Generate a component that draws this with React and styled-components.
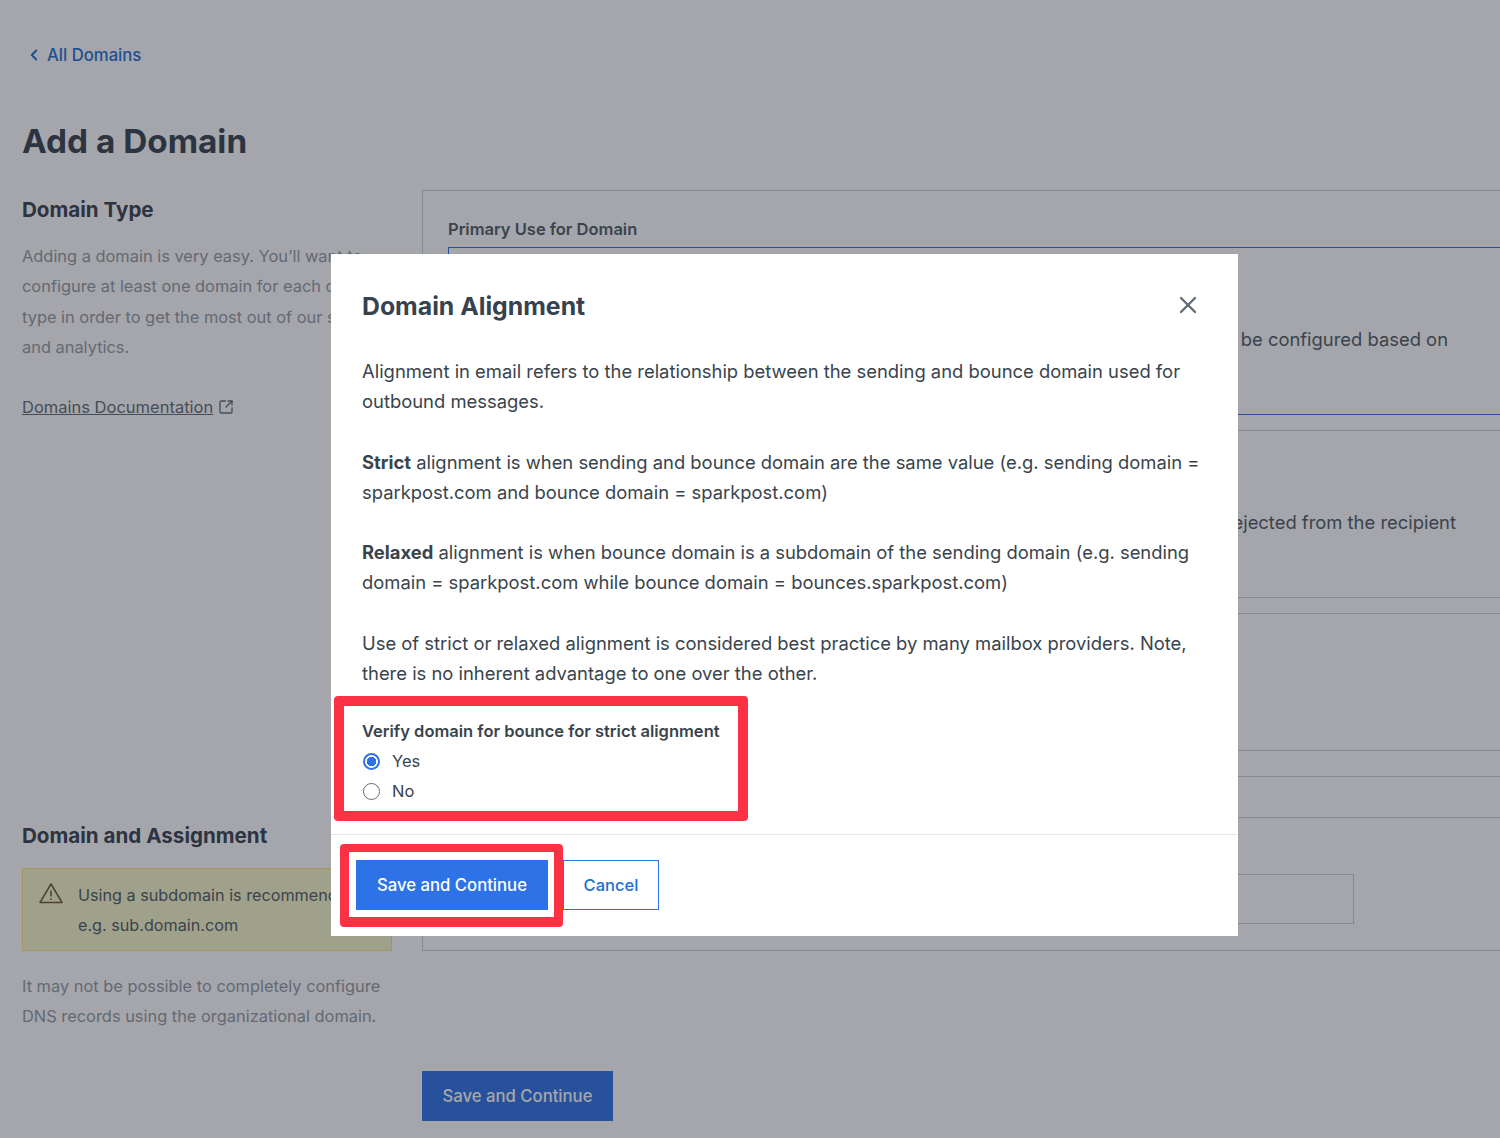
import React from 'react';
import styled, { createGlobalStyle } from 'styled-components';
import { ChevronLeft, SquareArrowOutUpRight, X } from 'lucide-react';

const GlobalStyle = createGlobalStyle`
    html, body {
        margin: 0;
        padding: 0;
        background: #fff;
    }
    body {
        font-family: Inter, "Liberation Sans", sans-serif;
        color: #39444d;
    }
    * {
        box-sizing: border-box;
    }
`;

const Page = styled.div`
    position: relative;
    width: 1500px;
    height: 1138px;
    overflow: hidden;
    padding: 43px 0 0 22px;
`;

const BackLink = styled.a`
    display: flex;
    align-items: center;
    gap: 4px;
    height: 24px;
    margin-left: 3px;
    font-size: 16.7px;
    font-weight: 500;
    color: #1a6fd4;
`;

const Title = styled.h1`
    margin: 51px 0 31px;
    font-size: 33.3px;
    line-height: 46px;
    font-weight: 700;
    color: #36424f;
`;

const Columns = styled.div`
    display: grid;
    grid-template-columns: 370px 1200px;
    column-gap: 30px;
`;

const Side = styled.aside`
    display: flex;
    flex-direction: column;
`;

const SideHeading = styled.h2`
    margin: ${(p) => p.$top || 0}px 0 ${(p) => p.$bottom}px;
    font-size: 20.6px;
    line-height: 30px;
    font-weight: 700;
    color: #36424f;
`;

const SideText = styled.p`
    margin: 0;
    font-size: 16.4px;
    line-height: 30.3px;
    color: #929aa2;
`;

const DocLink = styled.a`
    display: flex;
    align-items: center;
    gap: 5px;
    margin-top: 30px;
    height: 30px;
    font-size: 16.5px;
    color: #5f6b76;
    span {
        text-decoration: underline;
    }
`;

const Warning = styled.div`
    display: flex;
    gap: 15px;
    height: 83px;
    margin-bottom: 20px;
    padding: 10.5px 16px;
    background: #f7f7c9;
    border: 1px solid #ffe27a;
    font-size: 16.2px;
    line-height: 30.3px;
    color: #4f5a64;
    white-space: nowrap;
    svg {
        flex: none;
        margin-top: 2px;
    }
`;

const Panel = styled.section`
    height: 761px;
    margin-top: -5px;
    padding: 22px 25px 0;
    border: 1px solid #c9ced3;
`;

const FieldLabel = styled.div`
    height: 34px;
    font-size: 16.5px;
    line-height: 32px;
    font-weight: 600;
    color: #4f5a64;
`;

const OptionCard = styled.div`
    display: flex;
    justify-content: flex-end;
    align-items: flex-end;
    height: ${(p) => p.$height}px;
    margin-bottom: ${(p) => p.$gap}px;
    padding-right: ${(p) => p.$right || 0}px;
    padding-bottom: ${(p) => p.$bottom || 0}px;
    border: 1px solid ${(p) => (p.$blue ? '#2d72e6' : '#c9ced3')};
    font-size: 18.4px;
    line-height: 30px;
    color: #4f5a64;
`;

const TextBox = styled.div`
    width: 906px;
    height: 50px;
    margin-top: 56px;
    border: 1px solid #c9ced3;
`;

const SubmitButton = styled.button`
    display: block;
    width: 191px;
    height: 50px;
    margin-top: 120px;
    border: 0;
    background: #2d72e6;
    color: #fff;
    font: 500 16.7px Inter, "Liberation Sans", sans-serif;
`;

const Scrim = styled.div`
    position: absolute;
    inset: 0;
    background: rgba(30, 32, 45, 0.4);
`;

const Modal = styled.div`
    position: absolute;
    left: 331px;
    top: 254px;
    width: 907px;
    height: 682px;
    display: flex;
    flex-direction: column;
    background: #fff;
`;

const ModalHeader = styled.header`
    display: flex;
    justify-content: space-between;
    align-items: center;
    height: 102px;
    padding: 2px 36px 0 31px;
`;

const ModalTitle = styled.h2`
    margin: 0;
    font-size: 24.8px;
    font-weight: 700;
    color: #36424f;
`;

const CloseButton = styled.button`
    display: flex;
    margin-bottom: 2px;
    padding: 0;
    border: 0;
    background: none;
    color: #5f6b76;
`;

const ModalBody = styled.div`
    padding: 0 31px;
    flex: 1;
`;

const Para = styled.p`
    margin: 0 0 30px;
    font-size: 18.4px;
    line-height: 30.3px;
    color: #39444d;
    strong {
        font-weight: 700;
    }
`;

const Callout = styled.div`
    width: fit-content;
    border: 10px solid #fd3144;
    border-radius: 4px;
    background: #fff;
`;

const RadioGroup = styled(Callout)`
    margin: -22px 0 0 -28px;
    padding: 10px 18px 5px;
`;

const GroupLabel = styled.div`
    font-size: 16.5px;
    line-height: 30px;
    font-weight: 600;
    color: #39444d;
`;

const RadioRow = styled.label`
    display: flex;
    align-items: center;
    gap: 12px;
    height: 30px;
    padding-left: 1px;
    font-size: 16.5px;
    color: #39444d;
`;

const RadioMark = styled.span`
    width: 17px;
    height: 17px;
    border-radius: 50%;
    border: ${(p) => (p.$checked ? '2px solid #2d72e6' : '1.5px solid #5f6b76')};
    background: ${(p) => (p.$checked ? 'radial-gradient(circle, #2d72e6 0 4.5px, #fff 5px)' : '#fff')};
`;

const ModalFooter = styled.footer`
    display: flex;
    align-items: flex-start;
    height: 102px;
    padding: 9px 0 0 9px;
    border-top: 1px solid #e1e6ea;
`;

const SaveCallout = styled(Callout)`
    padding: 8px 6px 7px 7px;
    border-width: 8px 9px 10px;
`;

const PrimaryButton = styled.button`
    display: block;
    width: 192px;
    height: 50px;
    border: 0;
    background: #2d72e6;
    color: #fff;
    font: 500 16.7px Inter, "Liberation Sans", sans-serif;
`;

const CancelButton = styled.button`
    width: 96px;
    height: 50px;
    margin-top: 16px;
    border: 1px solid #2d72e6;
    background: #fff;
    color: #1a6fd4;
    font: 500 16.5px Inter, "Liberation Sans", sans-serif;
`;

const WarningIcon = () => (
    <svg width="24" height="22" viewBox="0 0 24 22" fill="none" stroke="#6d5a2e" strokeWidth="1.5" strokeLinejoin="round">
        <path d="M12 2 L23 20.5 H1 Z" />
        <path d="M12 8.5 V14.5" />
        <path d="M12 16.5 V18" />
    </svg>
);

const Radio = ({ checked, children }) => (
    <RadioRow>
        <RadioMark $checked={checked} />
        {children}
    </RadioRow>
);

const App = () => (
    <>
        <GlobalStyle />
        <Page>
            <BackLink>
                <ChevronLeft size={18} strokeWidth={2.5} />
                All Domains
            </BackLink>
            <Title>Add a Domain</Title>
            <Columns>
                <Side>
                    <SideHeading $bottom={16}>Domain Type</SideHeading>
                    <SideText>
                        Adding a domain is very easy. You’ll want to configure at least one domain for each domain
                        type in order to get the most out of our sending and analytics.
                    </SideText>
                    <DocLink>
                        <span>Domains Documentation</span>
                        <SquareArrowOutUpRight size={16} />
                    </DocLink>
                    <SideHeading $top={399} $bottom={17}>Domain and Assignment</SideHeading>
                    <Warning>
                        <WarningIcon />
                        <div>
                            Using a subdomain is recommended,
                            <br />
                            e.g. sub.domain.com
                        </div>
                    </Warning>
                    <SideText>
                        It may not be possible to completely configure DNS records using the organizational domain.
                    </SideText>
                </Side>
                <div>
                    <Panel>
                        <FieldLabel>Primary Use for Domain</FieldLabel>
                        <OptionCard $blue $height={168} $gap={15} $right={147} $bottom={60}>
                            be configured based on
                        </OptionCard>
                        <OptionCard $height={168} $gap={15} $right={139} $bottom={60}>
                            rejected from the recipient
                        </OptionCard>
                        <OptionCard $height={138} $gap={25} />
                        <OptionCard $height={42} $gap={0} />
                        <TextBox />
                    </Panel>
                    <SubmitButton>Save and Continue</SubmitButton>
                </div>
            </Columns>
            <Scrim />
            <Modal>
                <ModalHeader>
                    <ModalTitle>Domain Alignment</ModalTitle>
                    <CloseButton>
                        <X size={28} strokeWidth={2} />
                    </CloseButton>
                </ModalHeader>
                <ModalBody>
                    <Para>
                        Alignment in email refers to the relationship between the sending and bounce domain used for
                        outbound messages.
                    </Para>
                    <Para>
                        <strong>Strict</strong> alignment is when sending and bounce domain are the same value (e.g.
                        sending domain = sparkpost.com and bounce domain = sparkpost.com)
                    </Para>
                    <Para>
                        <strong>Relaxed</strong> alignment is when bounce domain is a subdomain of the sending domain
                        (e.g. sending domain = sparkpost.com while bounce domain = bounces.sparkpost.com)
                    </Para>
                    <Para>
                        Use of strict or relaxed alignment is considered best practice by many mailbox providers. Note,
                        there is no inherent advantage to one over the other.
                    </Para>
                    <RadioGroup>
                        <GroupLabel>Verify domain for bounce for strict alignment</GroupLabel>
                        <Radio checked>Yes</Radio>
                        <Radio>No</Radio>
                    </RadioGroup>
                </ModalBody>
                <ModalFooter>
                    <SaveCallout>
                        <PrimaryButton>Save and Continue</PrimaryButton>
                    </SaveCallout>
                    <CancelButton>Cancel</CancelButton>
                </ModalFooter>
            </Modal>
        </Page>
    </>
);

export default App;
